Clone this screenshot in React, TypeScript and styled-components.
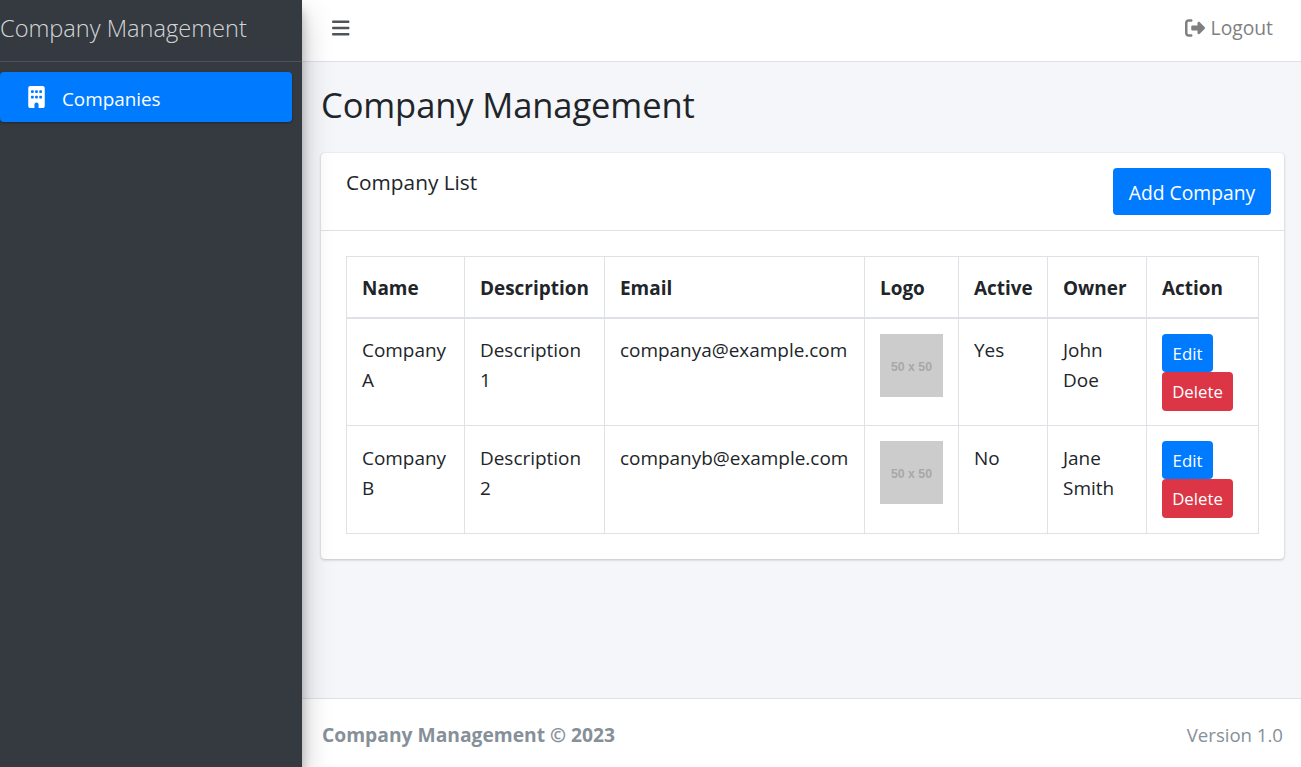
import React from "react";
import styled, { createGlobalStyle } from "styled-components";
import { FaBars, FaBuilding, FaRightFromBracket } from "react-icons/fa6";

const Global = createGlobalStyle`
  html, body { margin: 0; padding: 0; height: 100%; }
  body { font-family: "Open Sans", "Noto Sans", sans-serif; font-size: 18.95px; line-height: 30px; color: #212529; overflow: hidden; }
  * { box-sizing: border-box; }
`;

const Shell = styled.div`
  display: flex;
  width: 1301px;
  height: 767px;
  background: #f4f6f9;
`;
const Sidebar = styled.aside`
  flex: 0 0 302px;
  background: #343a40;
  box-shadow: 0 14px 28px rgba(0,0,0,.25), 0 10px 10px rgba(0,0,0,.22);
  z-index: 2;
  display: flex;
  flex-direction: column;
`;
const Brand = styled.div`
  height: 62px;
  border-bottom: 1px solid #4b545c;
  color: rgba(255,255,255,.8);
  font-size: 23.6px;
  font-weight: 300;
  line-height: 57px;
  white-space: nowrap;
`;
const Nav = styled.nav`
  padding: 10px 10px 0 0;
`;
const NavItem = styled.a`
  display: flex;
  align-items: center;
  height: 50px;
  padding: 3px 0 0 28px;
  gap: 17px;
  background: #007bff;
  color: #fff;
  font-size: 18.85px;
  border-radius: 4px;
  box-shadow: 0 1px 3px rgba(0,0,0,.12), 0 1px 2px rgba(0,0,0,.24);
  svg { width: 17px; height: 22px; flex: none; margin-top: -3px; }
`;
const Main = styled.div`
  flex: 1;
  min-width: 0;
  display: flex;
  flex-direction: column;
`;
const Header = styled.header`
  height: 62px;
  flex: none;
  background: #fff;
  border-bottom: 1px solid #dee2e6;
  display: flex;
  align-items: center;
  justify-content: space-between;
  padding: 0 28px 5px 30px;
`;
const Burger = styled.span`
  display: flex;
  color: #4f5458;
  svg { width: 17.5px; height: 20px; }
`;
const Logout = styled.a`
  display: flex;
  align-items: center;
  gap: 6px;
  color: #7f7f7f;
  font-size: 19.3px;
  svg { width: 20px; height: 20px; }
`;
const Content = styled.main`
  flex: 1;
  padding: 20px 17px 0 19px;
`;
const Title = styled.h1`
  margin: 0 0 25px;
  font-size: 34.5px;
  font-weight: 400;
  line-height: 46px;
  letter-spacing: -0.1px;
`;
const Card = styled.section`
  background: #fff;
  border-radius: 4px;
  box-shadow: 0 0 1px rgba(0,0,0,.125), 0 1px 3px rgba(0,0,0,.2);
  height: 406px;
`;
const CardHeader = styled.div`
  height: 78px;
  border-bottom: 1px solid #dee2e6;
  display: flex;
  justify-content: space-between;
  padding: 14px 13px 0 25px;
`;
const CardTitle = styled.h3`
  margin: 0;
  font-size: 20.8px;
  font-weight: 400;
  line-height: 30px;
`;
const AddButton = styled.button`
  width: 158px;
  height: 47px;
  margin-top: 1px;
  padding: 2px 0 0;
  background: #007bff;
  color: #fff;
  border: 0;
  border-radius: 4px;
  font: inherit;
  font-size: 19.3px;
`;
const CardBody = styled.div`
  padding: 25px;
`;
const Table = styled.table`
  border-collapse: collapse;
  table-layout: fixed;
  width: 913px;
`;
const Th = styled.th<{ $w: number }>`
  width: ${p => p.$w}px;
  height: 61.5px;
  padding: 2px 15px 0;
  border: 1px solid #dee2e6;
  border-bottom-width: 2px;
  text-align: left;
  font-weight: 700;
  white-space: nowrap;
`;
const Td = styled.td`
  height: 107.7px;
  padding: 16.4px 15px 0;
  border: 1px solid #dee2e6;
  vertical-align: top;
`;
const Thumb = styled.div`
  width: 63px;
  height: 62.6px;
  margin-top: -1.4px;
  background: #ccc;
  color: #a8a8a8;
  font: 700 12.3px/66px "Liberation Sans", Arial, sans-serif;
  text-align: center;
`;
const ActionGroup = styled.div`
  margin-top: -1.6px;
`;
const ActionButton = styled.button<{ $danger?: boolean }>`
  display: block;
  min-width: 51px;
  height: 38.4px;
  padding: 1px 10.2px 0;
  border: 0;
  border-radius: 4px;
  background: ${p => (p.$danger ? "#dc3545" : "#007bff")};
  color: #fff;
  font-family: inherit;
  font-size: 16.8px;
  line-height: 38px;
`;
const Footer = styled.footer`
  height: 69px;
  flex: none;
  background: #fff;
  border-top: 1px solid #dee2e6;
  display: flex;
  align-items: center;
  justify-content: space-between;
  padding: 3px 18px 0 20px;
  color: #869099;
`;
const FooterNote = styled.strong`
  font-size: 19.25px;
  font-weight: 700;
`;
const Version = styled.span`
  font-size: 18.6px;
`;

const rows = [
  { name: "Company A", desc: "Description 1", email: "companya@example.com", active: "Yes", owner: "John Doe" },
  { name: "Company B", desc: "Description 2", email: "companyb@example.com", active: "No", owner: "Jane Smith" },
];
const cols: [string, number][] = [
  ["Name", 118], ["Description", 140], ["Email", 260], ["Logo", 94],
  ["Active", 89], ["Owner", 99], ["Action", 112],
];

export default function App() {
  return (
    <Shell>
      <Global />
      <Sidebar>
        <Brand>Company Management</Brand>
        <Nav>
          <NavItem><FaBuilding />Companies</NavItem>
        </Nav>
      </Sidebar>
      <Main>
        <Header>
          <Burger><FaBars /></Burger>
          <Logout><FaRightFromBracket />Logout</Logout>
        </Header>
        <Content>
          <Title>Company Management</Title>
          <Card>
            <CardHeader>
              <CardTitle>Company List</CardTitle>
              <AddButton>Add Company</AddButton>
            </CardHeader>
            <CardBody>
              <Table>
                <thead>
                  <tr>{cols.map(([c, w]) => <Th key={c} $w={w}>{c}</Th>)}</tr>
                </thead>
                <tbody>
                  {rows.map(r => (
                    <tr key={r.name}>
                      <Td>{r.name}</Td>
                      <Td>{r.desc}</Td>
                      <Td>{r.email}</Td>
                      <Td><Thumb>50 x 50</Thumb></Td>
                      <Td>{r.active}</Td>
                      <Td>{r.owner}</Td>
                      <Td>
                        <ActionGroup>
                          <ActionButton>Edit</ActionButton>
                          <ActionButton $danger>Delete</ActionButton>
                        </ActionGroup>
                      </Td>
                    </tr>
                  ))}
                </tbody>
              </Table>
            </CardBody>
          </Card>
        </Content>
        <Footer>
          <FooterNote>Company Management © 2023</FooterNote>
          <Version>Version 1.0</Version>
        </Footer>
      </Main>
    </Shell>
  );
}
